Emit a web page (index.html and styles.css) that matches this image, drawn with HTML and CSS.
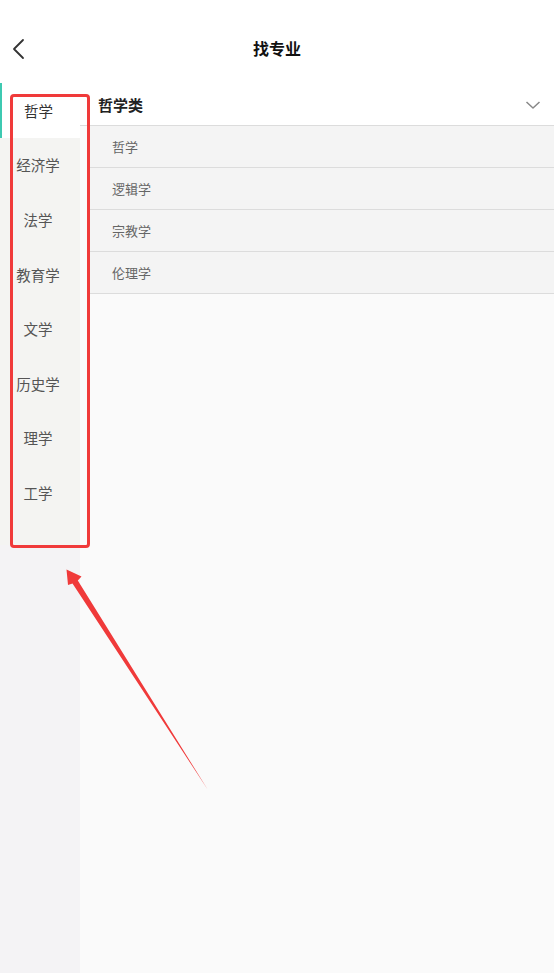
FILE: index.html
```html
<!DOCTYPE html>
<html lang="zh-CN">
<head>
<meta charset="utf-8">
<title>找专业</title>
<link rel="stylesheet" href="styles.css">
</head>
<body>
<div class="app">
  <header class="topbar">
    <svg class="back" width="14" height="22" viewBox="0 0 14 22"><polyline points="11,2 2,11 11,20" fill="none" stroke="#333" stroke-width="1.8" stroke-linecap="round" stroke-linejoin="round"/></svg>
    <h1 class="title">找专业</h1>
  </header>
  <main class="body">
    <nav class="side">
      <ul class="side-list">
        <li class="side-item active">哲学</li>
        <li class="side-item">经济学</li>
        <li class="side-item">法学</li>
        <li class="side-item">教育学</li>
        <li class="side-item">文学</li>
        <li class="side-item">历史学</li>
        <li class="side-item">理学</li>
        <li class="side-item">工学</li>
      </ul>
    </nav>
    <section class="pane">
      <div class="group-head">
        <span class="group-name">哲学类</span>
        <svg class="caret" width="16" height="10" viewBox="0 0 16 10"><polyline points="1.5,2 8,8 14.5,2" fill="none" stroke="#888" stroke-width="1.5" stroke-linejoin="round"/></svg>
      </div>
      <ul class="majors">
        <li class="major">哲学</li>
        <li class="major">逻辑学</li>
        <li class="major">宗教学</li>
        <li class="major">伦理学</li>
      </ul>
    </section>
  </main>
  <div class="mark-box"></div>
  <svg class="mark-arrow" width="554" height="973" viewBox="0 0 554 973">
    <polygon points="66.5,569.5 81.5,576.5 77.8,580.5 208,790 72.5,583.5 68,585" fill="#f03a3a"/>
  </svg>
</div>
</body>
</html>
```
FILE: styles.css
```css
* { box-sizing: border-box; }
html, body {
  margin: 0;
  padding: 0;
  background: #fafafa;
  font-family: "Noto Sans CJK SC", "Noto Sans", sans-serif;
}
ul { list-style: none; margin: 0; padding: 0; }

.app {
  position: relative;
  width: 554px;
  height: 973px;
  overflow: hidden;
  display: flex;
  flex-direction: column;
}

.topbar {
  height: 83px;
  flex: none;
  background: #fff;
  display: flex;
  justify-content: center;
  position: relative;
  padding-top: 36px;
}
.back {
  position: absolute;
  left: 12px;
  top: 38px;
}
.title {
  margin: 0;
  font-size: 16px;
  font-weight: 700;
  color: #111;
  line-height: 24px;
}

.body {
  flex: 1;
  display: flex;
}

.side {
  width: 80px;
  flex: none;
  background: #f4f3f5;
}
.side-list {
  background: #f4f4f2;
  padding-bottom: 25px;
}
.side-item {
  height: 54.6px;
  display: flex;
  align-items: center;
  justify-content: center;
  padding-right: 4px;
  font-size: 14.5px;
  color: #555;
  position: relative;
}
.side-item.active {
  background: #fff;
  color: #333;
  justify-content: flex-start;
  padding-left: 24px;
}
.side-item.active::before {
  content: "";
  position: absolute;
  left: 0;
  top: 0;
  bottom: 0;
  width: 2px;
  background: #3ec9b1;
}

.pane {
  flex: 1;
  background: #fafafa;
  padding-left: 8px;
}
.group-head {
  height: 43px;
  background: #fff;
  border-bottom: 1px solid #dcdcdc;
  display: flex;
  align-items: center;
  justify-content: space-between;
  margin-left: -8px;
  padding: 0 13px 0 18px;
}
.group-name {
  font-size: 15px;
  font-weight: 700;
  color: #222;
}
.caret { margin-top: 1px; }

.majors { background: #f4f4f4; }
.major {
  height: 42px;
  border-bottom: 1px solid #dcdcdc;
  display: flex;
  align-items: center;
  padding-left: 24px;
  font-size: 13px;
  color: #666;
}

/* red annotation frame and arrow drawn on top */
.mark-box {
  position: absolute;
  left: 10px;
  top: 94px;
  width: 80px;
  height: 454px;
  border: 3px solid #f03a3a;
  border-radius: 4px;
  pointer-events: none;
}
.mark-arrow {
  position: absolute;
  left: 0;
  top: 0;
  pointer-events: none;
}
```
